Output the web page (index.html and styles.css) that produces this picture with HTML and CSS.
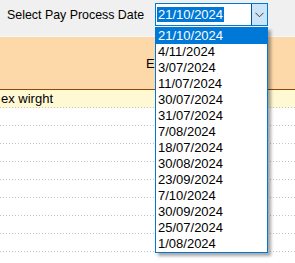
FILE: index.html
```html
<!DOCTYPE html>
<html lang="en">
    <head>
        <meta charset="utf-8" />
        <title>Pay Process</title>
        <link rel="stylesheet" href="styles.css">
    </head>
    <body>
        <!-- toolbar with the date picker -->
        <div class="toolbar">
            <label class="toolbar_label">Select Pay Process Date</label>
            <div class="combo">
                <div class="combo_text"><span class="combo_sel">21/10/2024</span></div>
                <div class="combo_btn">
                    <svg width="9" height="6" viewBox="0 0 9 6"><path d="M0.5 0.8 L4.5 4.8 L8.5 0.8" fill="none" stroke="#3c3c3c" stroke-width="1"/></svg>
                </div>
            </div>
        </div>

        <!-- grid -->
        <div class="grid">
            <div class="grid_head">
                <div class="head_spacer"></div>
                <div class="head_cell">Employee Name</div>
            </div>
            <div class="row row_current">ex wirght</div>
            <div class="row"></div>
            <div class="row"></div>
            <div class="row"></div>
            <div class="row"></div>
            <div class="row"></div>
            <div class="row"></div>
            <div class="row"></div>
            <div class="row"></div>
        </div>

        <!-- open drop down list -->
        <ul class="dropdown">
            <li class="selected">21/10/2024</li>
            <li>4/11/2024</li>
            <li>3/07/2024</li>
            <li>11/07/2024</li>
            <li>30/07/2024</li>
            <li>31/07/2024</li>
            <li>7/08/2024</li>
            <li>18/07/2024</li>
            <li>30/08/2024</li>
            <li>23/09/2024</li>
            <li>7/10/2024</li>
            <li>30/09/2024</li>
            <li>25/07/2024</li>
            <li>1/08/2024</li>
        </ul>
    </body>
</html>
```

FILE: styles.css
```css
body {
    margin: 0;
    font-family: "Liberation Sans", Arial, sans-serif;
    font-size: 13px;
    color: #000;
    background-color: #fff;
    overflow: hidden;
}

/* top toolbar */
.toolbar {
    display: flex;
    align-items: center;
    height: 33px;
    padding: 3px 0 0 7px;
    box-sizing: content-box;
    background-color: #f0f0f0;
    border-bottom: 1px solid #f7f7f7;
}

.toolbar {
    height: 23px;
    padding-bottom: 10px;
}

.toolbar_label {
    width: 148px;
    font-size: 12.4px;
    color: #000;
}

.combo {
    display: flex;
    width: 113px;
    height: 23px;
    box-sizing: border-box;
    border: 1px solid #0078d7;
    background-color: #fff;
}

.combo_text {
    flex: 1;
    display: flex;
    align-items: center;
    padding-left: 1px;
}

.combo_sel {
    background-color: #0078d7;
    color: #fff;
    line-height: 15px;
    padding: 0 1px;
}

.combo_btn {
    width: 15px;
    display: flex;
    align-items: center;
    justify-content: center;
    background-color: #cce4f7;
    border-left: 1px solid #005499;
}

/* grid */
.grid_head {
    display: flex;
    height: 52px;
    align-items: center;
    background-color: #fdd9aa;
    border-bottom: 1px solid #8a4a0a;
}

.head_spacer {
    width: 146px;
}

.head_cell {
    padding-top: 1px;
}

.row {
    height: 18px;
    box-sizing: border-box;
    padding-left: 1px;
    line-height: 17px;
    background-image: linear-gradient(to right, #c4c4c4 1px, transparent 1px);
    background-size: 3px 1px;
    background-repeat: repeat-x;
    background-position: left bottom;
}

.row_current {
    background-color: #fff9d3;
}

/* the open list of the combo */
.dropdown {
    position: absolute;
    left: 155px;
    top: 27px;
    width: 113px;
    box-sizing: border-box;
    margin: 0;
    padding: 0;
    list-style: none;
    background-color: #fff;
    border: 1px solid #0078d7;
    box-shadow: 3px 3px 3px rgba(0, 0, 0, 0.35);
}

.dropdown li {
    height: 16px;
    line-height: 16px;
    padding-left: 2px;
}

.dropdown li.selected {
    background-color: #0078d7;
    color: #fff;
}
```
